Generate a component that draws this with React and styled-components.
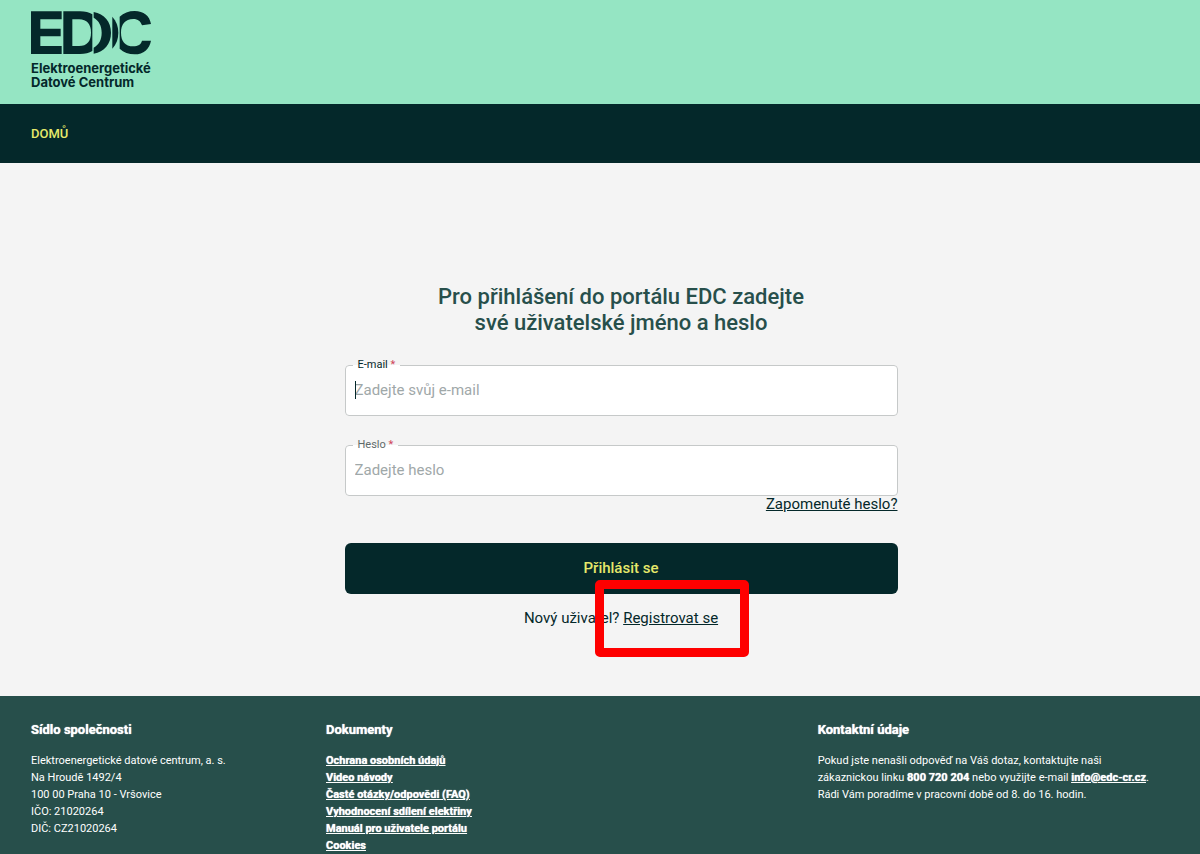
import React, { useState } from "react";
import styled, { createGlobalStyle } from "styled-components";

const GlobalStyle = createGlobalStyle`
  * {
    box-sizing: border-box;
  }

  body {
    margin: 0;
    background: #f4f4f4;
    color: #04282a;
    font-family: Roboto, "Open Sans", sans-serif;
    font-size: 15px;
  }
`;

const Page = styled.div`
  display: flex;
  flex-direction: column;
  min-height: 100vh;
`;

const Header = styled.header`
  background: #95e5c3;
  padding: 5px 25px 15px;
`;

const LogoLink = styled.a`
  display: inline-flex;
  flex-direction: column;
  color: #04282a;
  text-decoration: none;
`;

const LogoText = styled.span`
  padding: 1px 6px 0;
  font-family: Inter, "Liberation Sans", sans-serif;
  font-size: 13px;
  font-weight: 700;
  line-height: 14px;
`;

const Nav = styled.nav`
  display: flex;
  align-items: center;
  height: 59px;
  padding: 0 31px;
  background: #04282a;
`;

const NavLink = styled.a`
  color: #e6e86a;
  font-size: 13px;
  font-weight: 500;
  text-decoration: none;
  text-transform: uppercase;
`;

const Main = styled.main`
  display: flex;
  flex: 1;
  justify-content: center;
  padding: 121px 0 69px 42px;
`;

const LoginForm = styled.form`
  display: flex;
  flex-direction: column;
  width: 100%;
  max-width: 553px;
`;

const Title = styled.h1`
  max-width: 400px;
  margin: 0 auto 23px;
  color: #274f4b;
  font-size: 22px;
  font-weight: 500;
  line-height: 26px;
  text-align: center;
`;

const Field = styled.fieldset`
  position: relative;
  min-width: 0;
  margin: 0 0 23px;
  padding: 0;
  background: #fff;
  border: 1px solid #c6c9c9;
  border-radius: 4px;
`;

const Legend = styled.legend`
  margin-left: 7px;
  padding: 0 5px;
  color: ${({ $active }) => ($active ? "#04282a" : "#5f6b6b")};
  font-size: 11px;
  line-height: 12px;
`;

const Required = styled.span`
  color: #d0455a;
`;

const Input = styled.input`
  display: block;
  width: 100%;
  height: 44px;
  padding: 0 9px 6px;
  background: none;
  border: 0;
  outline: 0;
  color: #04282a;
  font: inherit;

  &::placeholder {
    color: #9fa8a9;
    opacity: 1;
  }
`;

const Caret = styled.span`
  position: absolute;
  top: 10px;
  left: 9px;
  width: 1px;
  height: 18px;
  background: #04282a;
`;

const TextLink = styled.a`
  color: #04282a;
  text-decoration: underline;
`;

const ForgottenRow = styled.div`
  margin: -24px 0 30px;
  line-height: 18px;
  text-align: right;
`;

const SubmitButton = styled.button`
  height: 51px;
  padding: 0 16px 2px;
  background: #04282a;
  border: 0;
  border-radius: 6px;
  color: #e6e86a;
  font-family: inherit;
  font-size: 15px;
  font-weight: 500;
  cursor: pointer;
`;

const RegisterRow = styled.p`
  margin: 15px 0 0;
  line-height: 18px;
  text-align: center;
`;

const Marked = styled.span`
  position: relative;
`;

const Highlight = styled.span`
  position: absolute;
  top: -29px;
  right: -31px;
  bottom: -30px;
  left: -28px;
  border: 9px solid #fe0000;
  border-radius: 5px;
  pointer-events: none;
`;

const Footer = styled.footer`
  display: grid;
  grid-template-columns: 3fr 5fr 4fr;
  padding: 25px 10px 2px;
  background: #274f4b;
  color: #fff;
  font-size: 11px;
  line-height: 17px;
`;

const FooterColumn = styled.section`
  padding-left: 21px;
`;

const FooterTitle = styled.h2`
  margin: 0 0 13px;
  font-size: 13px;
  font-weight: 700;
  line-height: 18px;
  text-shadow: 0 0 1px #fff;
`;

const FooterText = styled.p`
  margin: 0;
`;

const FooterList = styled.ul`
  margin: 0;
  padding: 0;
  list-style: none;
`;

const FooterStrong = styled.strong`
  font-weight: 700;
  text-shadow: 0 0 1px #fff;
`;

const FooterLink = styled.a`
  color: #fff;
  font-weight: 700;
  text-decoration: underline;
  text-shadow: 0 0 1px #fff;
`;

const documents = [
  "Ochrana osobních údajů",
  "Video návody",
  "Časté otázky/odpovědi (FAQ)",
  "Vyhodnocení sdílení elektřiny",
  "Manuál pro uživatele portálu",
  "Cookies",
];

const Logo = () => (
  <svg width="130" height="55" viewBox="0 0 390 165" fill="#04282a" aria-hidden="true">
    <path d="M18 19H110V43H46V71H107V94H46V123H110V147H18Z" />
    <path
      fillRule="evenodd"
      d="M115 19H165C180 19 193 22 202 28V138C193 144 180 147 165 147H115ZM142 43V123H162C186 123 198 108 198 83C198 58 186 43 162 43Z"
    />
    <path d="M206 21C238 27 258 50 258 83C258 116 238 140 206 146V128C222 118 230 104 230 83C230 62 222 48 206 38Z" />
    <path d="M262 35C274 48 280 64 280 83C280 102 274 118 262 131Z" />
    <path d="M351 107H378C373 132 356 148 329 148C311 148 296 142 284 131V35C296 24 311 18 329 18C356 18 374 33 378 57L351 61C347 49 339 42 325 42C300 42 288 58 288 83C288 108 300 124 325 124C339 124 348 118 351 107Z" />
  </svg>
);

const LoginField = ({ id, label, active, ...inputProps }) => (
  <Field>
    <Legend $active={active}>
      <label htmlFor={id}>
        {label} <Required>*</Required>
      </label>
    </Legend>
    <Input id={id} {...inputProps} />
    {active && !inputProps.value && <Caret />}
  </Field>
);

const App = () => {
  const [email, setEmail] = useState("");
  const [password, setPassword] = useState("");

  return (
    <Page>
      <GlobalStyle />
      <Header>
        <LogoLink href="#">
          <Logo />
          <LogoText>
            Elektroenergetické
            <br />
            Datové Centrum
          </LogoText>
        </LogoLink>
      </Header>
      <Nav>
        <NavLink href="#">Domů</NavLink>
      </Nav>

      <Main>
        <LoginForm onSubmit={(e) => e.preventDefault()}>
          <Title>Pro přihlášení do portálu EDC zadejte své uživatelské jméno a heslo</Title>
          <LoginField
            id="email"
            label="E-mail"
            type="email"
            placeholder="Zadejte svůj e-mail"
            value={email}
            onChange={(e) => setEmail(e.target.value)}
            active
          />
          <LoginField
            id="password"
            label="Heslo"
            type="password"
            placeholder="Zadejte heslo"
            value={password}
            onChange={(e) => setPassword(e.target.value)}
          />
          <ForgottenRow>
            <TextLink href="#">Zapomenuté heslo?</TextLink>
          </ForgottenRow>
          <SubmitButton type="submit">Přihlásit se</SubmitButton>
          <RegisterRow>
            Nový uživatel?{" "}
            <Marked>
              <TextLink href="#">Registrovat se</TextLink>
              <Highlight />
            </Marked>
          </RegisterRow>
        </LoginForm>
      </Main>

      <Footer>
        <FooterColumn>
          <FooterTitle>Sídlo společnosti</FooterTitle>
          <FooterText>
            Elektroenergetické datové centrum, a. s.
            <br />
            Na Hroudě 1492/4
            <br />
            100 00 Praha 10 - Vršovice
            <br />
            IČO: 21020264
            <br />
            DIČ: CZ21020264
          </FooterText>
        </FooterColumn>
        <FooterColumn>
          <FooterTitle>Dokumenty</FooterTitle>
          <FooterList>
            {documents.map((name) => (
              <li key={name}>
                <FooterLink href="#">{name}</FooterLink>
              </li>
            ))}
          </FooterList>
        </FooterColumn>
        <FooterColumn>
          <FooterTitle>Kontaktní údaje</FooterTitle>
          <FooterText>
            Pokud jste nenašli odpověď na Váš dotaz, kontaktujte naši
            <br />
            zákaznickou linku <FooterStrong>800 720 204</FooterStrong> nebo využijte e-mail{" "}
            <FooterLink href="#">info@edc-cr.cz</FooterLink>.
            <br />
            Rádi Vám poradíme v pracovní době od 8. do 16. hodin.
          </FooterText>
        </FooterColumn>
      </Footer>
    </Page>
  );
};

export default App;
